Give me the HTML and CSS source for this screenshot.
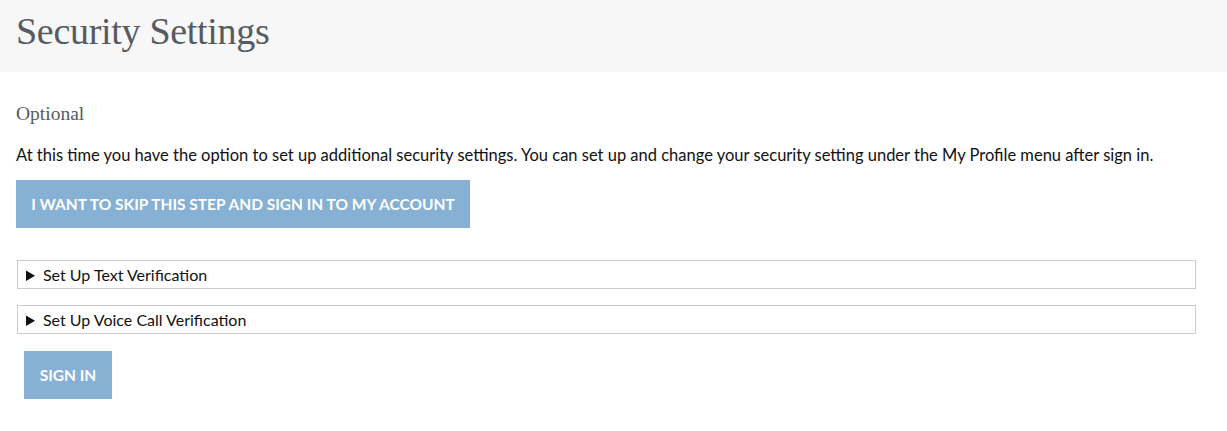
FILE: index.html
```html
<!DOCTYPE html>
<html>
<head>
<meta charset="utf-8">
<link rel="stylesheet" href="styles.css">
</head>
<body>
<header class="page-header">
  <h1 class="page-title">Security Settings</h1>
</header>
<main class="content">
  <h2 class="section-title">Optional</h2>
  <p class="intro">At this time you have the option to set up additional security settings. You can set up and change your security setting under the My Profile menu after sign in.</p>
  <button class="btn btn-skip">I WANT TO SKIP THIS STEP AND SIGN IN TO MY ACCOUNT</button>
  <details class="panel"><summary>Set Up Text Verification</summary></details>
  <details class="panel"><summary>Set Up Voice Call Verification</summary></details>
  <div class="actions">
    <button class="btn btn-signin">SIGN IN</button>
  </div>
</main>
</body>
</html>
```
FILE: styles.css
```css
html, body { margin: 0; padding: 0; background: #fff; }
body { font-family: "Lato", "Liberation Sans", sans-serif; color: #111; }
.page-header { background: #f7f7f7; height: 72px; padding: 0 16px; box-sizing: border-box; display: flex; align-items: center; }
.page-title { margin: 0; font-family: "Liberation Serif", serif; font-weight: normal; font-size: 38px; color: #555b60; letter-spacing: -0.3px; padding-bottom: 10px; }
.content { padding: 0 16px; width: 1180px; }
.section-title { margin: 31px 0 0; font-family: "Liberation Serif", serif; font-weight: normal; font-size: 19.5px; color: #555b60; }
.intro { margin: 20px 0 0; font-size: 16.5px; line-height: 20px; }
.btn { display: block; border: 0; background: #86b0d4; color: #fff; font-family: "Lato", "Liberation Sans", sans-serif; font-weight: bold; font-size: 15.5px; height: 48px; padding: 0; white-space: nowrap; text-align: center; cursor: pointer; }
.btn-skip { margin-top: 15px; width: 454px; }
.panel { border: 1px solid #ccc; margin: 0 0 0 1px; }
.btn-skip + .panel { margin-top: 32px; }
.panel + .panel { margin-top: 16px; }
.panel summary { height: 27px; line-height: 27px; padding-left: 8px; font-size: 16px; cursor: pointer; }
.actions { padding: 17px 8px 0; }
.btn-signin { width: 88px; }
```
